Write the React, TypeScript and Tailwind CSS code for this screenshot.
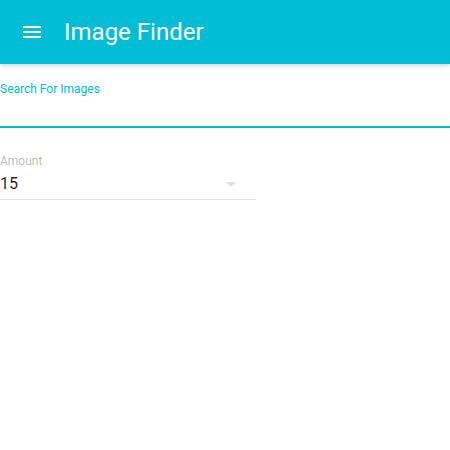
const MenuIcon = () => (
  <svg viewBox="0 0 24 24" className="h-6 w-6 fill-white">
    <path d="M3 18h18v-2H3v2zm0-5h18v-2H3v2zm0-7v2h18V6H3z" />
  </svg>
);

const App = () => {
  return (
    <div className="min-h-[450px] bg-white font-['Roboto',sans-serif]">
      {/* App bar */}
      <header className="relative z-10 flex h-16 items-center bg-[#00bcd4] pl-5 shadow-[0_1px_6px_rgba(0,0,0,0.12),0_1px_4px_rgba(0,0,0,0.12)]">
        <MenuIcon />
        <h1 className="ml-5 text-2xl font-normal leading-[64px] text-white">
          Image Finder
        </h1>
      </header>

      {/* Search field */}
      <div className="mt-[17px] flex flex-col">
        <label className="text-xs leading-4 text-[#00bcd4]">Search For Images</label>
        <div className="mt-[29px] h-[2px] w-full bg-[#00bcd4]" />
      </div>

      {/* Amount select */}
      <div className="mt-[25px] flex w-64 flex-col">
        <label className="text-xs leading-4 text-black/30">Amount</label>
        <div className="mt-[3px] flex h-6 items-center justify-between">
          <span className="text-base leading-6 text-black/87">15</span>
          <svg viewBox="0 0 10 5" className="mr-[20px] h-[5px] w-[10px] fill-[#e0e0e0]">
            <path d="M0 0l5 5 5-5z" />
          </svg>
        </div>
        <div className="mt-[3px] h-px w-full bg-[#e0e0e0]" />
      </div>
    </div>
  );
};

export default App;
